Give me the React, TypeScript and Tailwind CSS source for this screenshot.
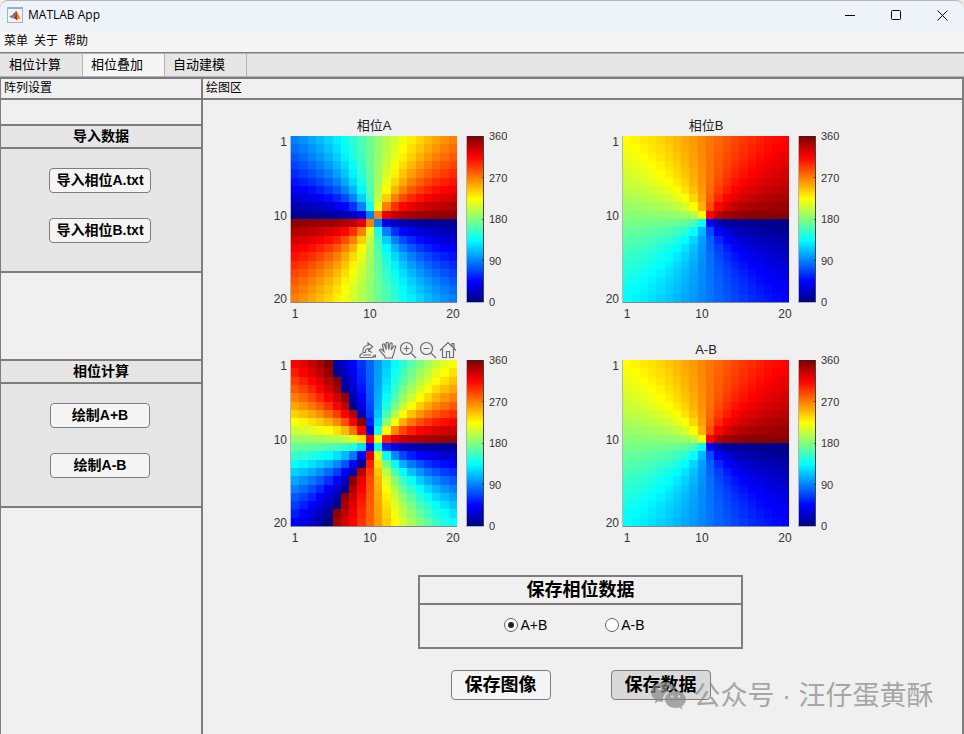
import React, { useState } from 'react';

type Formula = (theta: number) => number;

type PhaseChartProps = {
    title?: string;
    formula: Formula;
    children?: React.ReactNode;
};

const SIZE = 20;
const PLOT = 166;
const LEFT = 21;

const wrap = (deg: number) => ((deg % 360) + 360) % 360;

// MATLAB "jet" colormap
const jet = (value: number) => {
    const v = value / 360;
    const channel = (center: number) =>
        Math.round(255 * Math.max(0, Math.min(1, 1.5 - Math.abs(4 * v - center))));
    return `rgb(${channel(3)},${channel(2)},${channel(1)})`;
};

const edge = (i: number) => Math.round((i * PLOT) / SIZE);

const yTicks = [
    { label: '1', y: 10 },
    { label: '10', y: 84 },
    { label: '20', y: 167 },
];

const xTicks = [
    { label: '1', x: 25 },
    { label: '10', x: 100 },
    { label: '20', x: 183 },
];

const barTicks = [360, 270, 180, 90, 0];

function PhaseChart({ title, formula, children }: PhaseChartProps) {
    const cells: React.ReactNode[] = [];
    for (let r = 0; r < SIZE; r++) {
        for (let c = 0; c < SIZE; c++) {
            const theta = wrap((Math.atan2(r - 9.5, c - 9.5) * 180) / Math.PI);
            cells.push(
                <rect
                    key={`${r}-${c}`}
                    x={LEFT + edge(c)}
                    y={edge(r)}
                    width={edge(c + 1) - edge(c)}
                    height={edge(r + 1) - edge(r)}
                    fill={jet(wrap(formula(theta)))}
                />
            );
        }
    }

    return (
        <div className="flex flex-col">
            <div className="ml-5 flex h-5 w-42 items-center justify-center text-[13px] text-[#212121]">
                {title}
                {children}
            </div>
            <svg width="246" height="188" className="overflow-visible" fill="#333">
                <g shapeRendering="crispEdges">
                    {cells}
                    <rect x={LEFT - 1} y="0" width="1" height="167" fill="#b5b5b5" />
                    <rect x={LEFT} y="166" width={PLOT} height="1" fill="#404040" fillOpacity="0.6" />
                    {Array.from({ length: PLOT }, (_, i) => (
                        <rect key={i} x="197" y={i} width="16" height="1" fill={jet(360 - (i * 360) / PLOT)} />
                    ))}
                    <path d="M197 .5h17M213.5 0v166" stroke="#262626" strokeOpacity="0.85" />
                    <path d="M197 166.5h17M196.5 0v167" stroke="#262626" strokeOpacity="0.3" />
                    <path d="M212 41.5h2M212 83.5h2M212 124.5h2" stroke="#262626" strokeOpacity="0.7" />
                </g>
                <g fontSize="12">
                    {yTicks.map(t => (
                        <text key={t.label} x="17" y={t.y} textAnchor="end">
                            {t.label}
                        </text>
                    ))}
                    {xTicks.map(t => (
                        <text key={t.label} x={t.x} y="182" textAnchor="middle">
                            {t.label}
                        </text>
                    ))}
                </g>
                <g fontSize="11">
                    {barTicks.map((t, i) => (
                        <text key={t} x="219" y={Math.round(4 + (i * PLOT) / 4)}>
                            {t}
                        </text>
                    ))}
                </g>
            </svg>
        </div>
    );
}

const tools = [
    {
        name: '导出',
        art: (
            <>
                <path d="M3.5 12 1 14v2.500h12.500L15 14M4 14h8" />
                <path d="M4 11.500C3.500 6.500 6 4.500 9 4.500V2l4.500 3.500L10 9.500V7.500C7.500 7.500 6 8.500 6.500 11.500Z" />
                <path d="m9 9.500 4 2" />
                <path d="M17 13v3.500h-3.500z" fill="currentColor" stroke="none" />
            </>
        ),
    },
    {
        name: '平移',
        art: (
            <path d="M6 17v-1.500L1 10c-.9-1.300.6-2.500 1.900-1.300L5 10.500 3.500 4.500C3.200 2.800 5.200 2.400 5.700 4L7.200 8.500 7 2.500C7 .9 9.200.9 9.300 2.500L9.600 8.500 11 3c.4-1.600 2.500-1.200 2.200.5l-1 5.500 2.400-3.500c.9-1.200 2.500-.3 1.900 1C15 9.500 15.500 12.500 13.500 15.500V17z" />
        ),
    },
    {
        name: '放大',
        art: (
            <>
                <circle cx="7.500" cy="7.500" r="6" />
                <path d="m12 12 5 5M7.500 4.500v6M4.500 7.500h6" />
            </>
        ),
    },
    {
        name: '缩小',
        art: (
            <>
                <circle cx="7.500" cy="7.500" r="6" />
                <path d="m12 12 5 5M4.500 7.500h6" />
            </>
        ),
    },
    {
        name: '还原视图',
        art: <path d="M1 9.500 9 1.500l8 8M3.500 8v8.500h4v-6h3v6h4V8M13 5.500V2.500h2V7.500" />,
    },
];

function ChartTools() {
    return (
        <div className="mr-px ml-auto flex gap-0.5">
            {tools.map(tool => (
                <button key={tool.name} type="button" aria-label={tool.name} className="text-[#6e6e6e]">
                    <svg
                        width="18"
                        height="18"
                        viewBox="0 0 18 18"
                        fill="none"
                        stroke="currentColor"
                        strokeWidth="1.2"
                    >
                        {tool.art}
                    </svg>
                </button>
            ))}
        </div>
    );
}

function MatlabIcon() {
    return (
        <svg width="16" height="16" viewBox="0 0 16 16">
            <rect x=".5" y=".5" width="15" height="15" fill="#f4f4f4" stroke="#a9b2bc" />
            <rect x="0" y="0" width="16" height="2" fill="#8fb1d6" />
            <path d="M2 9.500 5.500 8 7.500 9.500 5.500 11.500z" fill="#4a90c8" />
            <path d="M5.500 8 9 4 7.500 9.500z" fill="#2b5f95" />
            <path d="M9 3.500C10.500 5 12 10 14 12c-1.500-.8-2.500-.5-4 1.500C9 12 7.500 11 5.500 11.500 7.500 9.500 8 6 9 3.500Z" fill="#e2641f" />
            <path d="M9 4c.3 3-.6 6-2 7.300 1.300.2 2 .9 2.800 2 .5-2 .2-7-.8-9.300Z" fill="#a8321a" />
            <path d="M9.800 6c.6 2 .7 4 .5 6l1.500-1z" fill="#f6a623" />
        </svg>
    );
}

type SidebarSectionProps = {
    title: string;
    actions: string[];
    buttonClass: string;
};

function SidebarSection({ title, actions, buttonClass }: SidebarSectionProps) {
    return (
        <section className="border-y-2 border-[#7d7d7d] bg-[#e6e6e6]">
            <h2 className="flex h-[23px] items-center justify-center border-b-2 border-[#7d7d7d] pb-0.5 text-sm font-bold">
                {title}
            </h2>
            <div className="flex flex-col items-center gap-[25px] pt-[19px] pr-0.5 pb-7">
                {actions.map(action => (
                    <button
                        key={action}
                        type="button"
                        className={`flex h-[25px] items-center justify-center rounded border border-[#7d7d7d] bg-[#f5f5f5] pb-0.5 text-sm font-bold whitespace-nowrap ${buttonClass}`}
                    >
                        {action}
                    </button>
                ))}
            </div>
        </section>
    );
}

const tabs = ['相位计算', '相位叠加', '自动建模'];

export default function App() {
    const [tab, setTab] = useState('相位叠加');
    const [target, setTarget] = useState('A+B');

    return (
        <div className="flex min-h-screen flex-col bg-[#f0f0f0] font-['Liberation_Sans','Noto_Sans_CJK_SC',sans-serif] text-black">
            <header className="flex h-[31px] items-center justify-between rounded-t-lg border-t border-[#b4b4b4] bg-[#eef3fa] pb-0.5 pl-[7px]">
                <div className="flex items-center gap-[5px] font-['Open_Sans',sans-serif] text-xs">
                    <MatlabIcon />
                    <h1>MATLAB App</h1>
                </div>
                <div className="flex gap-[35px] pr-4">
                    <button type="button" aria-label="最小化">
                        <svg width="11" height="11" stroke="#000">
                            <path d="M0 5.500h10" />
                        </svg>
                    </button>
                    <button type="button" aria-label="最大化">
                        <svg width="11" height="11" stroke="#000" fill="none">
                            <rect x=".5" y=".5" width="9" height="9" rx="1" />
                        </svg>
                    </button>
                    <button type="button" aria-label="关闭">
                        <svg width="11" height="11" stroke="#000">
                            <path d="m.5.500 10 10m0-10-10 10" />
                        </svg>
                    </button>
                </div>
            </header>

            <nav className="flex h-[21px] items-center gap-1.5 bg-[#f5f5f5] pb-0.5 pl-1 text-xs">
                <button type="button">菜单</button>
                <button type="button">关于</button>
                <button type="button">帮助</button>
            </nav>

            <div className="border-t border-[#7d7d7d]">
                <div className="flex h-6 border-y border-[#b4b4b4] bg-[#e6e6e6] pl-px">
                    {tabs.map(t => (
                        <button
                            key={t}
                            type="button"
                            onClick={() => setTab(t)}
                            className={`w-[82px] border-r border-[#b4b4b4] pl-2 text-left text-[13px] leading-5 ${
                                t === tab ? 'bg-[#f5f5f5]' : 'bg-[#e6e6e6]'
                            }`}
                        >
                            {t}
                        </button>
                    ))}
                </div>
            </div>

            <div className="flex flex-1 border-t-2 border-r-2 border-l border-[#7d7d7d]">
                <aside className="w-[202px] shrink-0 border-r-2 border-[#7d7d7d]">
                    <h2 className="flex h-[21px] items-center border-b-2 border-[#7d7d7d] pb-0.5 pl-[3px] text-xs">
                        阵列设置
                    </h2>
                    <div className="pt-6">
                        <SidebarSection
                            title="导入数据"
                            actions={['导入相位A.txt', '导入相位B.txt']}
                            buttonClass="w-[102px]"
                        />
                    </div>
                    <div className="pt-[86px]">
                        <SidebarSection
                            title="相位计算"
                            actions={['绘制A+B', '绘制A-B']}
                            buttonClass="w-[100px]"
                        />
                    </div>
                </aside>

                <main className="flex flex-1 flex-col">
                    <h2 className="flex h-[21px] items-center border-b-2 border-[#7d7d7d] pb-0.5 pl-[3px] text-xs">
                        绘图区
                    </h2>
                    <div className="flex flex-1 flex-col items-center pt-4">
                        <div className="grid grid-cols-2 gap-x-[86px] gap-y-4 pr-[47px]">
                            <PhaseChart title="相位A" formula={theta => 2 * theta} />
                            <PhaseChart title="相位B" formula={theta => theta} />
                            <PhaseChart formula={theta => 3 * theta}>
                                <ChartTools />
                            </PhaseChart>
                            <PhaseChart title="A-B" formula={theta => theta} />
                        </div>

                        <fieldset className="mt-[27px] mr-1 w-[325px] border-2 border-[#7d7d7d]">
                            <h3 className="flex h-7 items-center justify-center border-b-2 border-[#7d7d7d] text-lg font-bold">
                                保存相位数据
                            </h3>
                            <div className="flex justify-center gap-[58px] pt-2.5 pr-3 pb-3 text-sm">
                                {['A+B', 'A-B'].map(option => (
                                    <label key={option} className="flex items-center gap-0.5">
                                        <input
                                            type="radio"
                                            name="target"
                                            value={option}
                                            checked={target === option}
                                            onChange={() => setTarget(option)}
                                            className="size-3.5 appearance-none rounded-full border border-[#616161] bg-white checked:border-4 checked:border-white checked:bg-[#212121] checked:outline checked:-outline-offset-1 checked:outline-[#616161]"
                                        />
                                        {option}
                                    </label>
                                ))}
                            </div>
                        </fieldset>

                        <div className="relative mt-[21px] flex gap-[60px] pr-1">
                            <button
                                type="button"
                                className="h-[30px] w-[100px] rounded border border-[#7d7d7d] bg-[#f5f5f5] text-lg leading-7 font-bold"
                            >
                                保存图像
                            </button>
                            <button
                                type="button"
                                className="h-[30px] w-[100px] rounded border border-[#7d7d7d] bg-[#d9d9d9] text-lg leading-7 font-bold"
                            >
                                保存数据
                            </button>
                            <div className="pointer-events-none absolute top-2 left-[200px] flex items-center gap-2 text-[27px] leading-9 whitespace-nowrap text-[#888] opacity-70">
                                <svg width="35" height="28" viewBox="0 0 35 28" fill="currentColor">
                                    <path
                                        fillRule="evenodd"
                                        d="M13 0C5.800 0 0 4.500 0 10c0 3.200 1.800 6 4.800 7.800L3.500 21.500l4.400-2.200c1.300.4 2.700.6 4.100.7C10.500 13 16 7.500 25 7.500 23.800 3.200 19 0 13 0ZM8.500 5a1.500 1.500 0 1 1 0 3 1.500 1.500 0 0 1 0-3Zm9 0a1.500 1.500 0 1 1 0 3 1.500 1.500 0 0 1 0-3Z"
                                    />
                                    <path
                                        fillRule="evenodd"
                                        d="M24.500 9C18.500 9 14 12.800 14 17.500S18.500 26 24.500 26c1.200 0 2.400-.2 3.500-.5l3.500 2-.9-3.200c2.700-1.600 4.400-4 4.400-6.800C35 12.800 30.500 9 24.500 9Zm-3.500 4.200a1.300 1.300 0 1 1 0 2.600 1.300 1.300 0 0 1 0-2.600Zm7 0a1.300 1.300 0 1 1 0 2.600 1.300 1.300 0 0 1 0-2.600Z"
                                    />
                                </svg>
                                <span>公众号 · 汪仔蛋黄酥</span>
                            </div>
                        </div>
                    </div>
                </main>
            </div>
        </div>
    );
}
